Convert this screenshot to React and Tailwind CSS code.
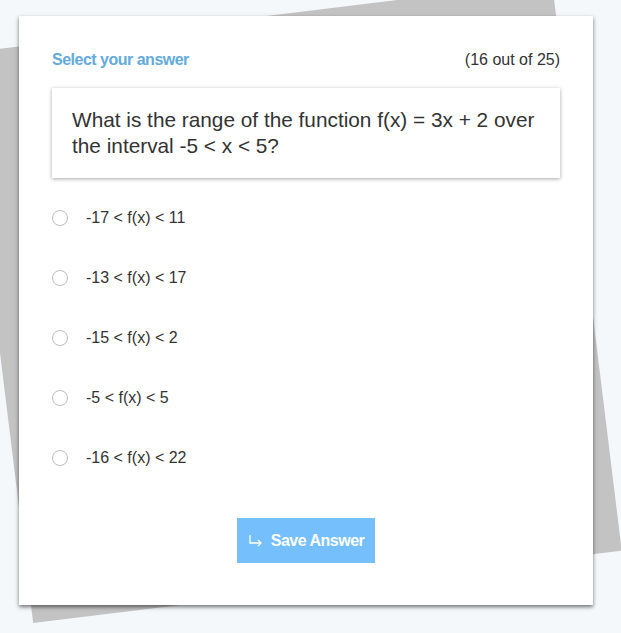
import React, { useState } from 'react';

const options = [
  '-17 < f(x) < 11',
  '-13 < f(x) < 17',
  '-15 < f(x) < 2',
  '-5 < f(x) < 5',
  '-16 < f(x) < 22',
];

export default function App() {
  const [selected, setSelected] = useState(null);

  return (
    <div className="relative min-h-[633px] w-full overflow-hidden bg-[#f5f8fb] font-['Liberation_Sans',Arial,sans-serif]">
      {/* rotated paper behind the card */}
      <div className="absolute left-[-4px] top-[15px] h-[574px] w-[593px] -rotate-7 bg-[#c4c3c4]"></div>

      <div className="relative z-10 px-[19px] pt-[16px]">
        <div className="flex h-[589px] w-[574px] flex-col bg-white px-[33px] pt-[32px] shadow-[0_2px_4px_rgba(0,0,0,0.55)]">
          <div className="flex items-center justify-between">
            <span className="text-[16px] font-semibold tracking-[-0.5px] text-[#64aadb]">Select your answer</span>
            <span className="text-[16px] text-[#333]">(16 out of 25)</span>
          </div>

          <div className="mt-[16px] bg-white px-5 py-[19px] shadow-[0_1px_4px_rgba(0,0,0,0.35)]">
            <p className="text-[20.8px] leading-[26px] text-[#333]">
              What is the range of the function f(x) = 3x + 2 over the interval -5 &lt; x &lt; 5?
            </p>
          </div>

          <div className="mt-[10px] flex flex-col">
            {options.map((opt, idx) => (
              <label key={idx} className="flex h-[60px] cursor-pointer items-center gap-[18px]">
                <span
                  onClick={() => setSelected(idx)}
                  className="flex h-4 w-4 shrink-0 items-center justify-center rounded-full border border-[#bdbdbd] bg-white"
                >
                  {selected === idx && <span className="h-2 w-2 rounded-full bg-[#74bffc]"></span>}
                </span>
                <span onClick={() => setSelected(idx)} className="text-[16px] text-[#333]">{opt}</span>
              </label>
            ))}
          </div>

          <div className="mt-[30px] flex justify-center">
            <button className="flex h-[45px] w-[138px] items-center justify-center gap-[7px] bg-[#74bffc] text-[16px] font-bold tracking-[-0.5px] text-white">
              <svg width="16" height="14" viewBox="0 0 16 14" fill="none" stroke="white" strokeWidth="1.3">
                <path d="M2 1v8h11" />
                <path d="M10 6l3 3-3 3" />
              </svg>
              Save Answer
            </button>
          </div>
        </div>
      </div>
    </div>
  );
}
